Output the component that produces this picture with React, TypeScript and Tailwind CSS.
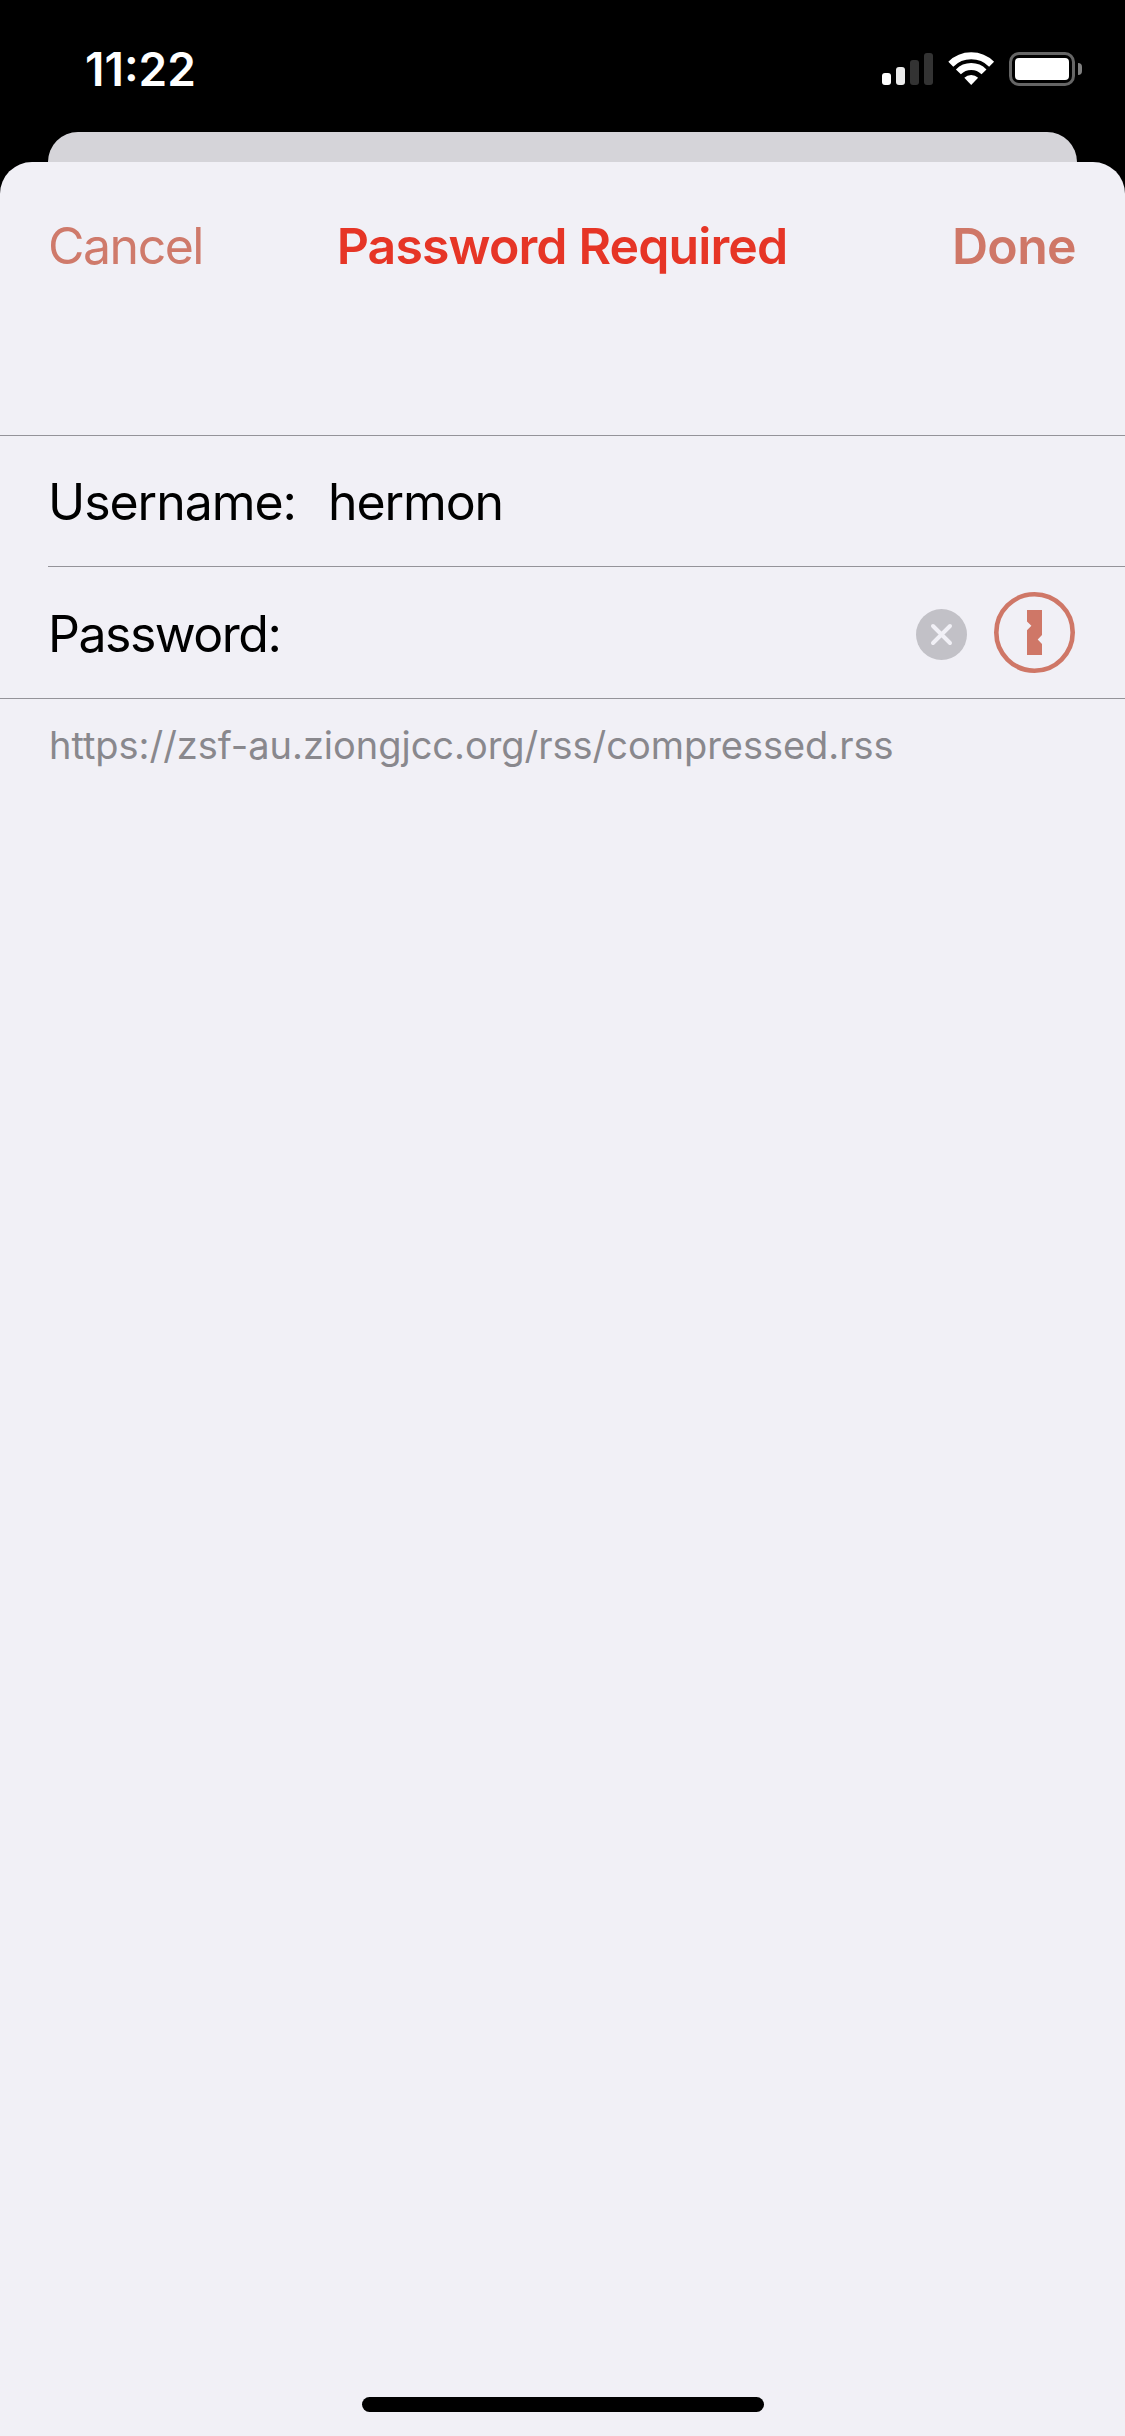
function SignalBars() {
  return (
    <div className="flex items-end gap-[5px] pb-px">
      <span className="h-3 w-[9px] rounded-[3px] bg-white" />
      <span className="h-[18px] w-[9px] rounded-[3px] bg-[#ebebeb]" />
      <span className="h-[25px] w-[9px] rounded-[3px] bg-[#333333]" />
      <span className="h-8 w-[9px] rounded-[3px] bg-[#333333]" />
    </div>
  );
}

function WifiIcon() {
  return (
    <svg className="ml-[15px] h-[34px] w-[47px]" viewBox="0 0 47 34" fill="none">
      <path d="M2.8 12.3A28.8 28.8 0 0 1 43.6 12.3" stroke="#fff" strokeWidth="7" />
      <path d="M10.4 19.9A18.1 18.1 0 0 1 36 19.9" stroke="#fff" strokeWidth="7" />
      <path d="M23.2 32.9 16.3 25.8A9.7 9.7 0 0 1 30.1 25.8Z" fill="#fff" />
    </svg>
  );
}

function BatteryIcon() {
  return (
    <div className="ml-[14px] flex items-center gap-[3px]">
      <div className="h-[34px] w-[66px] rounded-[10px] border-[3px] border-[#666666] p-[3px]">
        <div className="h-full rounded-[4px] bg-white" />
      </div>
      <span className="h-3 w-1 rounded-r-full bg-[#808080]" />
    </div>
  );
}

function StatusBar() {
  return (
    <header className="flex h-[132px] shrink-0 justify-between pl-[85px] pr-[43px]">
      <time className="pt-[37px] text-[46px] leading-[64px] font-semibold text-white">11:22</time>
      <div className="mt-[52px] flex h-[34px] items-center">
        <SignalBars />
        <WifiIcon />
        <BatteryIcon />
      </div>
    </header>
  );
}

function ClearIcon() {
  return (
    <svg className="mt-[3px] size-[51px]" viewBox="0 0 51 51">
      <circle cx="25.5" cy="25.5" r="25.5" fill="#c2c1c7" />
      <path d="m17 17 17 17m0-17L17 34" stroke="#f1f0f6" strokeWidth="4" strokeLinecap="round" />
    </svg>
  );
}

function OnePasswordIcon() {
  return (
    <svg className="ml-[27px] size-[81px]" viewBox="0 0 81 81">
      <circle cx="40.5" cy="40.5" r="38.2" fill="none" stroke="#cf7767" strokeWidth="4.6" />
      <path d="M33 18H48V43L43.7 47.6 48 52V63H33V38.3L37.4 33.8 33 29.4Z" fill="#cf7767" />
    </svg>
  );
}

export default function App() {
  return (
    <div className="flex h-[2436px] w-[1125px] flex-col overflow-hidden bg-black font-[Inter,sans-serif] text-black">
      <StatusBar />
      <div className="mx-12 h-[30px] shrink-0 rounded-t-[30px] bg-[#d5d4d9]" />
      <main className="flex grow flex-col rounded-t-[32px] bg-[#f1f0f6]">
        <nav className="grid h-[273px] grid-cols-[1fr_auto_1fr] items-start pl-12 pr-[49px] pt-[54px] text-[50px] leading-[60px]">
          <button className="justify-self-start text-left tracking-[-1.5px] text-[#cf7a6b]">Cancel</button>
          <h1 className="font-semibold tracking-[-0.88px] text-[#e63526]">Password Required</h1>
          <button className="justify-self-end font-semibold tracking-[-0.65px] text-[#cf7767]">Done</button>
        </nav>
        <section className="border-y border-[#949399] text-[50px] leading-[60px]">
          <div className="ml-12 flex h-[131px] border-b border-[#949399] pt-9">
            <label className="w-[280px] tracking-[-1.05px]">Username:</label>
            <span className="tracking-[-1.1px]">hermon</span>
          </div>
          <div className="flex h-[131px] items-center pl-12 pr-[50px]">
            <label className="grow pt-0.5 tracking-[-1.5px]">Password:</label>
            <ClearIcon />
            <OnePasswordIcon />
          </div>
        </section>
        <p className="pt-[26px] pl-[49px] text-[38px] leading-[40px] tracking-[-0.03px] text-[#89888d]">
          https://zsf-au.ziongjcc.org/rss/compressed.rss
        </p>
        <div className="mx-auto mt-auto mb-6 h-[15px] w-[402px] rounded-full bg-black" />
      </main>
    </div>
  );
}
